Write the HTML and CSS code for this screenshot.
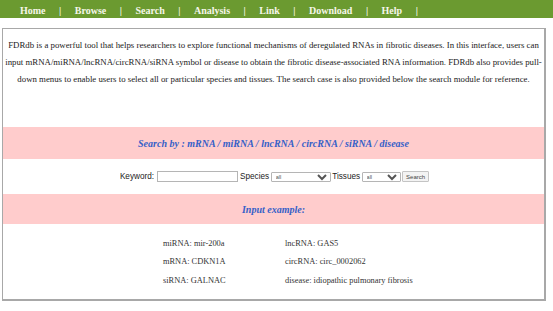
FILE: index.html
```html
<!DOCTYPE html>
<html>
<head>
<meta charset="utf-8">
<link rel="stylesheet" href="styles.css">
</head>
<body>
<nav class="nav">
  <a>Home</a><span class="sep">|</span>
  <a>Browse</a><span class="sep">|</span>
  <a>Search</a><span class="sep">|</span>
  <a>Analysis</a><span class="sep">|</span>
  <a>Link</a><span class="sep">|</span>
  <a>Download</a><span class="sep">|</span>
  <a>Help</a><span class="sep">|</span>
</nav>
<div class="box">
  <p class="intro">FDRdb is a powerful tool that helps researchers to explore functional mechanisms of deregulated RNAs in fibrotic diseases. In this interface, users can input mRNA/miRNA/lncRNA/circRNA/siRNA symbol or disease to obtain the fibrotic disease-associated RNA information. FDRdb also provides pull-down menus to enable users to select all or particular species and tissues. The search case is also provided below the search module for reference.</p>
  <div class="band band-search">Search by : mRNA / miRNA / lncRNA / circRNA / siRNA / disease</div>
  <form class="form">
    <label>Keyword:</label>
    <input type="text" class="kw">
    <label>Species</label>
    <select class="sel-species"><option>all</option></select>
    <label>Tissues</label>
    <select class="sel-tissue"><option>all</option></select>
    <button type="button" class="btn">Search</button>
  </form>
  <div class="band band-example">Input example:</div>
  <div class="examples">
    <span>miRNA: mir-200a</span><span>lncRNA: GAS5</span>
    <span>mRNA: CDKN1A</span><span>circRNA: circ_0002062</span>
    <span>siRNA: GALNAC</span><span>disease: idiopathic pulmonary fibrosis</span>
  </div>
</div>
</body>
</html>
```
FILE: styles.css
```css
html, body {
  margin: 0;
  padding: 0;
  background: #fff;
}
body {
  font-family: "Liberation Serif", "Times New Roman", serif;
}
.nav {
  height: 18px;
  background: #6b9a30;
  display: flex;
  align-items: center;
  padding-left: 20px;
  gap: 13.5px;
  font-weight: bold;
  font-size: 10px;
  color: #f6f6ea;
  padding-top: 2px;
  box-sizing: border-box;
}
.box {
  margin: 10px 0 0 2px;
  width: 544px;
  height: 273px;
  box-sizing: border-box;
  border: 1px solid #a8a8a8;
  border-right: 2px solid #a8a8a8;
  border-bottom: 2px solid #a8a8a8;
  display: flex;
  flex-direction: column;
}
.intro {
  margin: 0;
  height: 98px;
  box-sizing: border-box;
  padding: 8px 1px 0 1px;
  text-align: center;
  font-size: 8.8px;
  line-height: 17px;
  color: #222;
}
.band {
  background: #ffcccc;
  display: flex;
  align-items: center;
  justify-content: center;
  font-weight: bold;
  font-style: italic;
  font-size: 10px;
  color: #3560c8;
}
.band-search {
  height: 32px;
}
.band-example {
  height: 30px;
}
.form {
  height: 35px;
  margin: 0;
  display: flex;
  align-items: center;
  justify-content: center;
  gap: 1.5px;
  padding-left: 2px;
  font-family: "Liberation Sans", Arial, sans-serif;
  font-size: 8.2px;
  color: #222;
}
.kw {
  width: 81px;
  height: 11px;
  box-sizing: border-box;
  border: 1px solid #b5b5b5;
  padding: 0;
  margin: 0 1px;
  font-size: 6px;
}
.form select {
  height: 10px;
  box-sizing: border-box;
  border: 1px solid #b5b5b5;
  border-radius: 1px;
  padding: 0;
  margin: 0;
  font-family: "Liberation Sans", Arial, sans-serif;
  font-size: 5.5px;
  color: #555;
  background: #fff;
}
.sel-species {
  width: 60px;
}
.sel-tissue {
  width: 39px;
}
.btn {
  width: 27px;
  height: 11px;
  box-sizing: border-box;
  padding: 0;
  margin: 0;
  border: 1px solid #c4c4c4;
  border-radius: 1px;
  background: #f3f3f3;
  font-family: "Liberation Sans", Arial, sans-serif;
  font-size: 6px;
  color: #444;
}
.examples {
  display: grid;
  grid-template-columns: 122px 140px;
  padding: 11px 0 0 160px;
  font-size: 8.4px;
  line-height: 18.3px;
  color: #333;
}
```
